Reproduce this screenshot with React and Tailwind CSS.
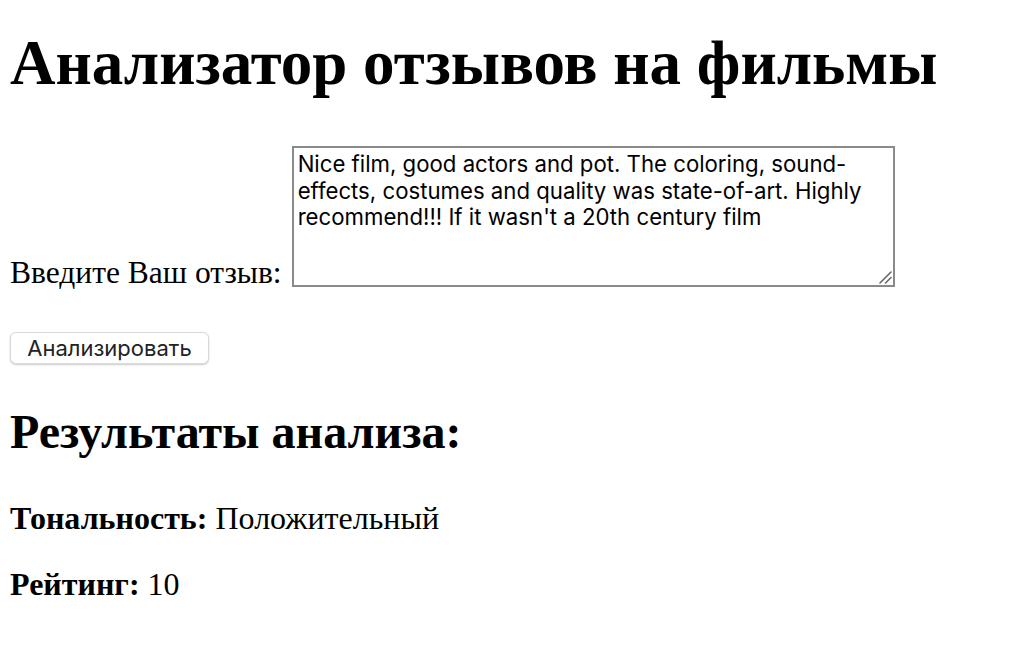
export default function App() {
  const serif = { fontFamily: '"Liberation Serif", "Times New Roman", serif' };
  const sans = { fontFamily: 'Inter, "Liberation Sans", Arial, sans-serif' };
  return (
    <div className="min-h-[654px] w-full bg-white text-black px-[10px] pt-[32px]" style={serif}>
      <h1 className="text-[63px] leading-[63px] font-bold m-0 whitespace-nowrap">Анализатор отзывов на фильмы</h1>
      <div className="flex items-end mt-[51px]">
        <label className="text-[31.5px] leading-[28px] whitespace-nowrap pr-[10px]">Введите Ваш отзыв:</label>
        <div className="relative">
          <textarea
            className="block w-[603px] h-[141px] border-2 border-[#8a8a8a] pl-[4px] pr-[3px] py-[3px] text-[22.2px] leading-[26.5px] text-black resize-none bg-white outline-none"
            style={sans}
            defaultValue="Nice film, good actors and pot. The coloring, sound-effects, costumes and quality was state-of-art. Highly recommend!!! If it wasn't a 20th century film"
          />
          <svg className="absolute right-[3px] bottom-[3px]" width="14" height="14" viewBox="0 0 14 14">
            <line x1="2" y1="13" x2="13" y2="2" stroke="#6b6b6b" strokeWidth="1.6" strokeLinecap="round" />
            <line x1="7.5" y1="13" x2="13" y2="7.5" stroke="#6b6b6b" strokeWidth="1.6" strokeLinecap="round" />
          </svg>
        </div>
      </div>
      <button
        className="mt-[45px] h-[32px] w-[199px] rounded-[6px] bg-white border border-[#d9d9d9] shadow-[0_1px_2px_rgba(0,0,0,0.2)] text-[22px] text-[#222] flex items-center justify-center"
        style={sans}
      >
        Анализировать
      </button>
      <h2 className="mt-[44px] text-[48px] leading-[48px] font-bold whitespace-nowrap">Результаты анализа:</h2>
      <p className="mt-[46px] text-[32px] leading-[32px]"><b>Тональность:</b> Положительный</p>
      <p className="mt-[34px] text-[32px] leading-[32px]"><b>Рейтинг:</b> 10</p>
    </div>
  );
}
